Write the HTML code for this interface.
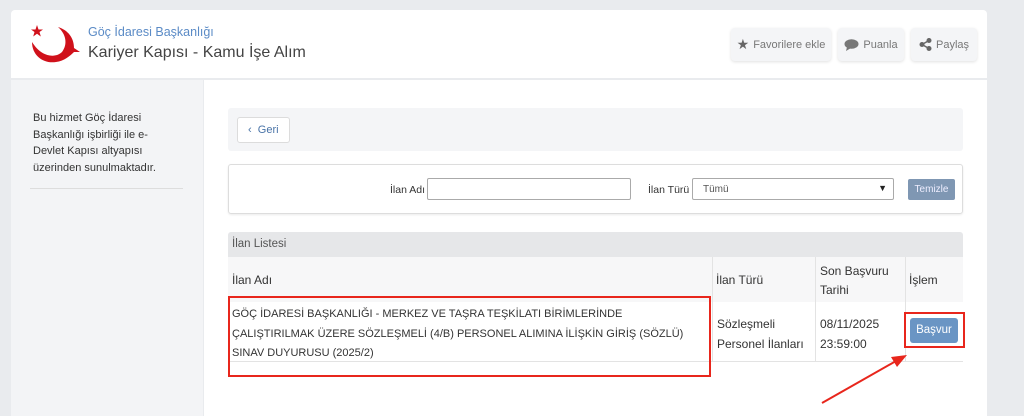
<!DOCTYPE html>
<html><head><meta charset="utf-8"><style>
*{box-sizing:border-box;margin:0;padding:0}
body{width:1024px;height:416px;overflow:hidden;background:#e9ebee;font-family:"Liberation Sans",sans-serif;position:relative;color:#333}
.abs{position:absolute}
.hdr{left:11px;top:10px;width:976px;height:68px;background:#fff;border-radius:4px 4px 0 0}
.btn{position:absolute;top:28px;height:33px;background:#f4f5f7;border-radius:4px;box-shadow:0 1px 3px rgba(0,0,0,.12);font-size:11px;color:#777;display:flex;align-items:center;justify-content:center;gap:4px}
.side{left:11px;top:80px;width:192px;height:336px;background:#f3f4f6}
.main{left:204px;top:80px;width:783px;height:336px;background:#fff}
</style></head><body>
<div class="abs hdr"></div>
<svg class="abs" style="left:28px;top:22px" width="54" height="44" viewBox="0 0 54 44">
<polygon points="9,3 10.5,7.5 15,7.5 11.5,10 12.8,14.5 9,11.8 5.2,14.5 6.5,10 3,7.5 7.5,7.5" fill="#d0111b"/>
<path d="M4 20 C4 34 16 42 28 40 C36 39 42 34 46 30 L52 30 L46 26 C46 16 40 8 30 5 C38 12 40 22 34 30 C28 36 14 36 4 20 Z" fill="#d0111b"/>
</svg>
<div class="abs" style="left:88px;top:25px;font-size:12.5px;color:#5b8bc6">Göç İdaresi Başkanlığı</div>
<div class="abs" style="left:88px;top:44px;font-size:16px;color:#444">Kariyer Kapısı - Kamu İşe Alım</div>
<div class="btn" style="left:731px;width:100px"><span style="color:#666;font-size:14px">★</span>Favorilere ekle</div>
<div class="btn" style="left:838px;width:66px"><svg width="15" height="12" viewBox="0 0 15 12"><ellipse cx="7.5" cy="5" rx="7" ry="4.8" fill="#777"/><path d="M3 8 L2 12 L7 9Z" fill="#777"/></svg>Puanla</div>
<div class="btn" style="left:911px;width:66px"><svg width="13" height="13" viewBox="0 0 13 13"><circle cx="3" cy="6.5" r="2.5" fill="#666"/><circle cx="10" cy="2.5" r="2.5" fill="#666"/><circle cx="10" cy="10.5" r="2.5" fill="#666"/><path d="M3 6.5L10 2.5M3 6.5L10 10.5" stroke="#666" stroke-width="1.5"/></svg>Paylaş</div>
<div class="abs side"></div>
<div class="abs" style="left:33px;top:110px;width:160px;font-size:11px;line-height:16.5px;color:#333;white-space:nowrap">Bu hizmet Göç İdaresi<br>Başkanlığı işbirliği ile e-<br>Devlet Kapısı altyapısı<br>üzerinden sunulmaktadır.</div>
<div class="abs" style="left:30px;top:188px;width:153px;height:1px;background:#ddd"></div>
<div class="abs main"></div>
<div class="abs" style="left:228px;top:108px;width:735px;height:43px;background:#f4f5f7;border-radius:3px"></div>
<div class="abs" style="left:237px;top:117px;width:53px;height:26px;background:#fff;border:1px solid #dcdcdc;border-radius:3px;font-size:11px;color:#4a74a8;line-height:24px;padding-left:10px">‹&nbsp;&nbsp;Geri</div>
<div class="abs" style="left:228px;top:164px;width:735px;height:50px;border:1px solid #ddd;border-radius:3px;box-shadow:0 1px 2px rgba(0,0,0,.08)"></div>
<div class="abs" style="left:390px;top:184px;font-size:10.5px;color:#333">İlan Adı</div>
<div class="abs" style="left:427px;top:178px;width:204px;height:22px;border:1px solid #aaa;border-radius:2px"></div>
<div class="abs" style="left:648px;top:184px;font-size:10.5px;color:#333">İlan Türü</div>
<div class="abs" style="left:692px;top:178px;width:202px;height:22px;border:1px solid #aaa;border-radius:2px;font-size:10px;color:#555;padding:5px 0 0 10px">Tümü<span style="position:absolute;right:6px;top:4px;font-size:9px;color:#222">▼</span></div>
<div class="abs" style="left:908px;top:179px;width:47px;height:21px;background:#7f97b3;border-radius:2px;font-size:10px;color:#eef;text-align:center;line-height:21px">Temizle</div>
<div class="abs" style="left:228px;top:232px;width:735px;height:25px;background:#e6e7e9;border-radius:3px 3px 0 0;font-size:11.5px;color:#555;padding:6px 0 0 4px">İlan Listesi</div>
<div class="abs" style="left:228px;top:257px;width:735px;height:45px;background:#f7f7f8"></div>
<div class="abs" style="left:228px;top:302px;width:735px;height:60px;border-bottom:1px solid #e3e3e3"></div>
<div class="abs" style="left:712px;top:257px;width:1px;height:105px;background:#e3e3e3"></div>
<div class="abs" style="left:815px;top:257px;width:1px;height:105px;background:#e3e3e3"></div>
<div class="abs" style="left:905px;top:257px;width:1px;height:105px;background:#e3e3e3"></div>
<div class="abs" style="left:232px;top:273px;font-size:12px">İlan Adı</div>
<div class="abs" style="left:716px;top:273px;font-size:12px">İlan Türü</div>
<div class="abs" style="left:820px;top:262px;font-size:12px;line-height:19px">Son Başvuru<br>Tarihi</div>
<div class="abs" style="left:909px;top:273px;font-size:12px">İşlem</div>
<div class="abs" style="left:232px;top:305px;font-size:11px;line-height:19.5px;width:480px;white-space:nowrap">GÖÇ İDARESİ BAŞKANLIĞI - MERKEZ VE TAŞRA TEŞKİLATI BİRİMLERİNDE<br>ÇALIŞTIRILMAK ÜZERE SÖZLEŞMELİ (4/B) PERSONEL ALIMINA İLİŞKİN GİRİŞ (SÖZLÜ)<br>SINAV DUYURUSU (2025/2)</div>
<div class="abs" style="left:717px;top:315px;font-size:12px;line-height:19.5px">Sözleşmeli<br>Personel İlanları</div>
<div class="abs" style="left:820px;top:315px;font-size:12px;line-height:19.5px">08/11/2025<br>23:59:00</div>
<div class="abs" style="left:910px;top:318px;width:48px;height:25px;background:#6a95c4;border-radius:3px;color:#fff;font-size:11.5px;text-align:center;line-height:25px">Başvur</div>
<div class="abs" style="left:228px;top:296px;width:483px;height:81px;border:2px solid #e8261c"></div>
<div class="abs" style="left:904px;top:312px;width:61px;height:36px;border:2px solid #e8261c"></div>
<svg class="abs" style="left:0;top:0" width="1024" height="416"><line x1="822" y1="403" x2="896" y2="361" stroke="#e8261c" stroke-width="2"/><polygon points="907,355 891,357 897,367" fill="#e8261c"/></svg>
</body></html>
